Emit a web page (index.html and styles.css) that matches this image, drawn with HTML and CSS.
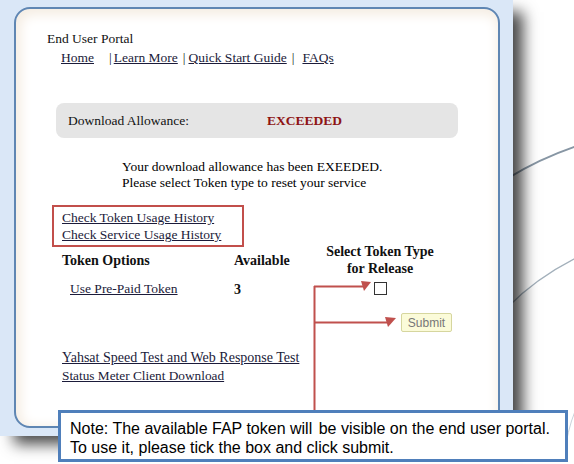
FILE: index.html
```html
<!DOCTYPE html>
<html lang="en">
<head>
	<meta charset="UTF-8">
	<title>End User Portal</title>
	<link rel="stylesheet" href="styles.css">
</head>
<body>
	<div id="page">
	<svg class="arcs" width="574" height="464" viewBox="0 0 574 464">
		<path d="M505 180 Q540 158 580 145" fill="none" stroke="#8796a4" stroke-width="2"/>
		<path d="M505 310 Q535 278 580 256" fill="none" stroke="#a3b0bb" stroke-width="1.3"/>
		<path d="M566 444 Q570 420 580 400" fill="none" stroke="#c9d2da" stroke-width="1"/>
	</svg>
	<div id="shot">
		<div id="panel">
			<div class="title">End User Portal</div>
			<div class="nav">
				<a href="javascript:;" class="home">Home</a>
				<span class="bar b1">|</span><a href="javascript:;">Learn More</a>
				<span class="bar b2">|</span><a href="javascript:;">Quick Start Guide</a>
				<span class="bar b3">|</span><a href="javascript:;" class="faq">FAQs</a>
			</div>
			<div class="allowance">
				<span class="label">Download Allowance:</span>
				<span class="state">EXCEEDED</span>
			</div>
			<div class="message">
				Your download allowance has been EXEEDED.<br>
				Please select Token type to reset your service
			</div>
			<div class="history">
				<a href="javascript:;">Check Token Usage History</a><br>
				<a href="javascript:;">Check Service Usage History</a>
			</div>
			<div class="tokens">
				<div class="th">Token Options</div>
				<div class="th">Available</div>
				<div class="th sel">Select Token Type<br>for Release</div>
				<div class="td opt"><a href="javascript:;">Use Pre-Paid Token</a></div>
				<div class="td num">3</div>
				<div class="td sel"><span class="box"></span></div>
			</div>
			<button class="submit">Submit</button>
			<div class="links">
				<a href="javascript:;">Yahsat Speed Test and Web Response Test</a><br>
				<a href="javascript:;" class="small">Status Meter Client Download</a>
			</div>
		</div>
	</div>
	<svg class="arrows" width="574" height="464" viewBox="0 0 574 464">
		<path d="M314.5 286 V412 M314 286.5 H363 M314 322.5 H388" fill="none" stroke="#c0504d" stroke-width="2"/>
		<path d="M371 282 L361 281 L364 291 Z" fill="#c0504d"/>
		<path d="M396 318 L385 317 L388 327 Z" fill="#c0504d"/>
	</svg>
	<div class="note">
		Note: The available FAP token will <span class="gap"></span>be visible on the end user portal.<br>
		To use it, please tick the box and click submit.
	</div>
	</div>
</body>
</html>
```

FILE: styles.css
```css
	body{
		margin:0;
		background:#fff;
	}
	#page{
		position:relative;
		width:574px;
		height:464px;
		overflow:hidden;
		background:#fff;
	}
	.arcs{
		position:absolute;
		left:0;
		top:0;
	}
	#shot{
		position:relative;
		width:513px;
		height:436px;
		box-sizing:border-box;
		padding:7px 13px 8px 14px;
		background:#dae7f7;
		box-shadow:12px 10px 14px -2px rgba(0,0,0,.72);
	}
	#panel{
		height:100%;
		box-sizing:border-box;
		border:2px solid #5f86b3;
		border-radius:16px;
		background:#fff;
		box-shadow:inset 2px 3px 12px 3px #f5ede3;
		padding:22px 0 0 31px;
		font-family:"Liberation Serif","Times New Roman",serif;
		font-size:13.5px;
		color:#111;
	}
	#panel a{
		color:#1b1b3a;
		text-decoration:underline;
	}
	.title{
		line-height:16px;
	}
	.nav{
		display:flex;
		margin-top:3px;
		padding-left:14px;
		line-height:16px;
	}
	.nav .home{ margin-right:15px;}
	.nav .bar{ color:#222;}
	.nav .b1{ margin-right:2px;}
	.nav .b2{ margin-left:5px; margin-right:3px;}
	.nav .b3{ margin-left:5px; margin-right:8px;}
	.allowance{
		display:flex;
		align-items:center;
		width:402px;
		height:35px;
		box-sizing:border-box;
		margin:37px 0 0 9px;
		padding-left:12px;
		background:#e5e5e5;
		border-radius:8px;
	}
	.allowance .label{
		width:199px;
	}
	.allowance .state{
		color:#8e1414;
		font-weight:bold;
		font-size:13.5px;
	}
	.message{
		margin:21px 0 0 75px;
		line-height:16px;
		color:#000;
	}
	.history{
		width:192px;
		box-sizing:border-box;
		margin:14px 0 0 5px;
		padding:2px 8px;
		border:2px solid #c24f4b;
		line-height:17px;
	}
	.tokens{
		display:grid;
		grid-template-columns:172px 81px 130px;
		row-gap:4px;
		margin:-4px 0 0 15px;
		line-height:17px;
		font-size:14px;
	}
	.th{
		font-weight:bold;
		align-self:center;
	}
	.sel{
		text-align:center;
	}
	.td{
		line-height:16px;
	}
	.opt{ padding-left:8px; font-size:13.5px;}
	.num{ font-weight:bold; padding-top:1px;}
	.box{
		display:inline-block;
		width:11px;
		height:11px;
		border:1px solid #333;
		vertical-align:-2px;
	}
	.submit{
		display:block;
		margin:15px 0 0 354px;
		width:51px;
		height:19px;
		padding:0;
		background:#fbfbd9;
		border:1px solid #d6d69e;
		border-radius:2px;
		font-family:"Liberation Sans",Arial,sans-serif;
		font-size:12px;
		color:#777;
	}
	.links{
		margin:17px 0 0 15px;
		line-height:18px;
		font-size:14px;
	}
	.links .small{
		font-size:13.3px;
	}
	.arrows{
		position:absolute;
		left:0;
		top:0;
	}
	.note{
		position:absolute;
		left:58px;
		top:410px;
		width:510px;
		height:52px;
		box-sizing:border-box;
		padding:6px 0 0 9px;
		border:3px solid #4f7fbb;
		background:#fff;
		font-family:"Liberation Sans",Arial,sans-serif;
		font-size:16px;
		line-height:19px;
		color:#000;
		white-space:nowrap;
	}
	.note .gap{
		margin-left:2px;
	}
```
